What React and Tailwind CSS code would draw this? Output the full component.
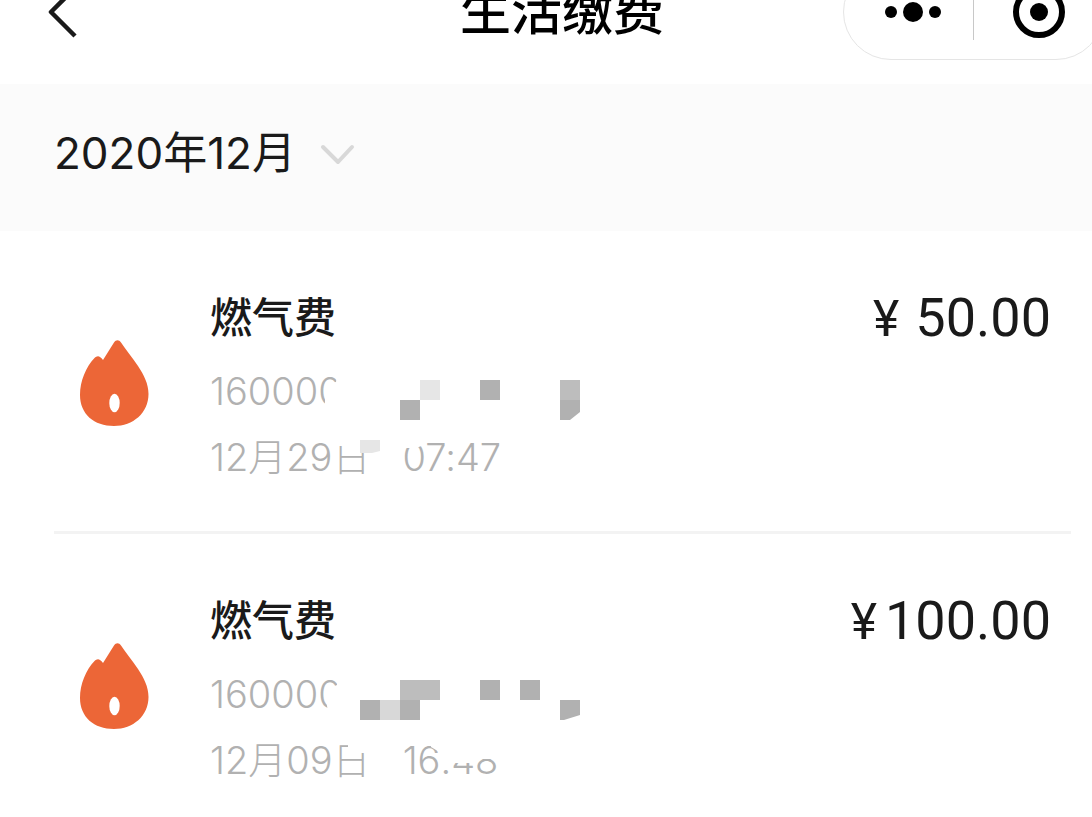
import React, { useState } from "react"

const months = ["2020年12月", "2020年11月", "2020年10月"]

const records = [
  {
    id: 1,
    title: "燃气费",
    account: "160000",
    date: "12月29日",
    time: "07:47",
    amount: "50.00",
    amountGap: "gap-4",
    covers: [
      "M128 10 L126 24 L118 25 L115 36 V60 H150 V10 Z",
      "M126 78 H172 V92 L150 94 V88 H126 Z",
      "M188 80 H214 V87 L206 90 H188 Z",
    ],
    blocks: [
      { d: "M210 22 h20 v20 h-20 Z", fill: "#e6e6e6" },
      { d: "M190 42 h20 v20 h-20 Z", fill: "#b1b1b1" },
      { d: "M270 22 h20 v20 h-20 Z", fill: "#b1b1b1" },
      { d: "M350 22 h20 v20 h-20 Z", fill: "#bdbdbd" },
      { d: "M350 42 h20 v12 l-10 8 h-10 Z", fill: "#b1b1b1" },
      { d: "M150 82 h20 v11 l-8 2 h-12 Z", fill: "#e6e6e6" },
    ],
  },
  {
    id: 2,
    title: "燃气费",
    account: "160000",
    date: "12月09日",
    time: "16:48",
    amount: "100.00",
    amountGap: "gap-2",
    covers: [
      "M128 10 L127 24 L118 28 L116 40 L120 60 H150 V10 Z",
      "M138 78 H165 V92 H146 L138 86 Z",
      "M221 78 H300 V98 H264 L262 102 H231 V92 L221 86 Z",
    ],
    blocks: [
      { d: "M190 19 h40 v20 h-40 Z", fill: "#bdbdbd" },
      { d: "M270 19 h20 v20 h-20 Z", fill: "#b1b1b1" },
      { d: "M310 19 h20 v20 h-20 Z", fill: "#b1b1b1" },
      { d: "M150 39 h20 v20 h-20 Z", fill: "#b1b1b1" },
      { d: "M170 39 h20 v20 h-20 Z", fill: "#d8d8d8" },
      { d: "M190 39 h20 v20 h-20 Z", fill: "#b1b1b1" },
      { d: "M350 39 h20 v15 l-16 5 h-4 Z", fill: "#b1b1b1" },
    ],
  },
]

function Header() {
  return (
    <header className="h-[84px] overflow-hidden bg-white">
      <div className="-mt-9 -mr-8 h-24 grid grid-cols-[1fr_auto_1fr] items-center">
        <button aria-label="返回" className="ml-12 w-8 h-14">
          <svg viewBox="0 0 32 56" className="w-8 h-14" fill="none" stroke="#1a1a1a" strokeWidth="4.5" strokeLinejoin="round">
            <path d="M27 4 L3 28 L27 52" />
          </svg>
        </button>
        <h1 className="text-[51px] leading-[72px] font-medium text-black">生活缴费</h1>
        <div className="justify-self-end mr-5 w-[261px] h-24 flex items-center rounded-full border border-[#e5e5e5]">
          <button aria-label="更多" className="w-[129px] h-14 flex items-center justify-center gap-[6px] pl-2">
            <span className="size-3 rounded-full bg-black" />
            <span className="size-5 rounded-full bg-black" />
            <span className="size-3 rounded-full bg-black" />
          </button>
          <span className="w-px h-14 bg-[#c8c8c8]" />
          <button aria-label="关闭" className="flex-1 h-14 flex items-center justify-center">
            <span className="size-[52px] rounded-full border-[6px] border-black flex items-center justify-center">
              <span className="size-[18px] rounded-full bg-black" />
            </span>
          </button>
        </div>
      </div>
    </header>
  )
}

function MonthPicker() {
  const [month, setMonth] = useState(months[0])

  return (
    <div className="bg-[#fbfbfb] pl-[54px] pt-[39px] pb-12 flex">
      <div className="relative flex items-center">
        <select
          aria-label="月份"
          value={month}
          onChange={(e) => setMonth(e.target.value)}
          className="appearance-none bg-transparent w-[304px] h-[60px] text-[44px] leading-[60px] text-[#1a1a1a] outline-none"
        >
          {months.map((m) => (
            <option key={m} value={m}>
              {m}
            </option>
          ))}
        </select>
        <svg
          viewBox="0 0 36 24"
          className="absolute right-0.5 w-9 h-6 pointer-events-none"
          fill="none"
          stroke="#d8d8d8"
          strokeWidth="4"
          strokeLinecap="round"
          strokeLinejoin="round"
        >
          <path d="M3 6 L18 21 L32 6" />
        </svg>
      </div>
    </div>
  )
}

function FlameIcon() {
  return (
    <svg viewBox="0 0 70 88" className="w-[70px] h-[88px] shrink-0" aria-hidden="true">
      <path
        fill="#ec6637"
        d="M35 3.5 C37 .5 40 .5 42 3.5 C46.5 10.5 53 18 59 27 C65 36 69.500 45 69.500 55 C69.500 74 54 87 35 87 C15 87 1 75 1 56 C1 42 7 28 15.500 19 C18 16.500 20.500 16 24 21 C28 15 31 9.500 35 3.5 Z"
      />
      <ellipse cx="35.500" cy="64" rx="5.200" ry="9.300" fill="#fff" />
    </svg>
  )
}

function Record({ record }) {
  return (
    <li className="flex items-start pt-[57px] pb-[41px] pl-[25px] pr-5 border-b-[3px] border-[#f3f3f3] last:border-b-0">
      <div className="mt-[51px]">
        <FlameIcon />
      </div>
      <div className="flex-1 ml-[61px]">
        <h2 className="text-[42px] leading-[60px] font-medium text-[#1a1a1a]">{record.title}</h2>
        <div className="relative mt-[10px] text-[38px] leading-[66px] font-light text-[#b1b1b1] [font-feature-settings:'calt'_0]">
          <p>{record.account}</p>
          <p className="flex gap-8">
            <span>{record.date}</span>
            <span>{record.time}</span>
          </p>
          <svg viewBox="0 0 400 132" className="absolute left-0 top-0 w-[400px] h-[132px]" aria-hidden="true">
            {record.covers.map((d) => (
              <path key={d} d={d} fill="#fff" />
            ))}
            {record.blocks.map((block) => (
              <path key={block.d} d={block.d} fill={block.fill} />
            ))}
          </svg>
        </div>
      </div>
      <p className={`flex items-baseline font-['Roboto',sans-serif] leading-[60px] text-[#1a1a1a] ${record.amountGap}`}>
        <span className="text-[50px]">¥</span>
        <span className="text-[54px]">{record.amount}</span>
      </p>
    </li>
  )
}

export default function App() {
  return (
    <div className="min-h-screen bg-white overflow-hidden font-['Inter','Noto_Sans_CJK_SC',sans-serif]">
      <Header />
      <MonthPicker />
      <ul className="pl-[54px] pr-[21px]">
        {records.map((record) => (
          <Record key={record.id} record={record} />
        ))}
      </ul>
    </div>
  )
}
